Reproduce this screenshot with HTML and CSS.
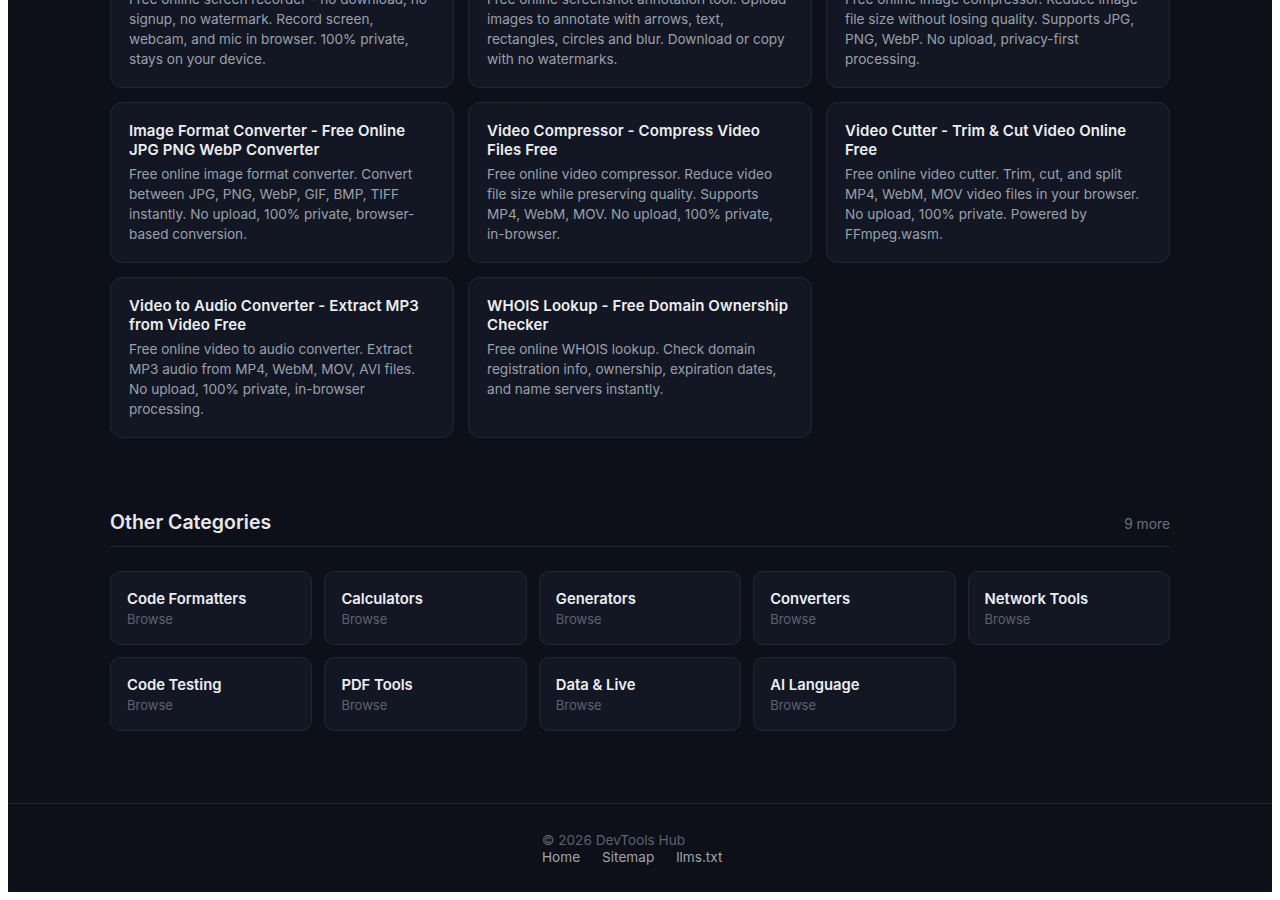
FILE: index.html
```html
<!DOCTYPE html>
<html lang="en">
<head>
    <meta charset="UTF-8">
    <meta name="viewport" content="width=device-width, initial-scale=1.0">
    <title>Media Tools - DevTools Hub</title>
    <link rel="stylesheet" href="styles.css">
</head>
<body>
    <div class="page">
        <div class="container">
            <div class="tool-grid">
                <a class="tool-card" href="#">
                    <h3>Screen Recorder - Free Online Screen Recording Tool</h3>
                    <p>Free online screen recorder - no download, no signup, no watermark. Record screen, webcam, and mic in browser. 100% private, stays on your device.</p>
                </a>
                <a class="tool-card" href="#">
                    <h3>Screenshot Annotator - Annotate Images Online Free</h3>
                    <p>Free online screenshot annotation tool. Upload images to annotate with arrows, text, rectangles, circles and blur. Download or copy with no watermarks.</p>
                </a>
                <a class="tool-card" href="#">
                    <h3>Image Compressor - Compress Images Online Free</h3>
                    <p>Free online image compressor. Reduce image file size without losing quality. Supports JPG, PNG, WebP. No upload, privacy-first processing.</p>
                </a>
                <a class="tool-card" href="#">
                    <h3>Image Format Converter - Free Online JPG PNG WebP Converter</h3>
                    <p>Free online image format converter. Convert between JPG, PNG, WebP, GIF, BMP, TIFF instantly. No upload, 100% private, browser-based conversion.</p>
                </a>
                <a class="tool-card" href="#">
                    <h3>Video Compressor - Compress Video Files Free</h3>
                    <p>Free online video compressor. Reduce video file size while preserving quality. Supports MP4, WebM, MOV. No upload, 100% private, in-browser.</p>
                </a>
                <a class="tool-card" href="#">
                    <h3>Video Cutter - Trim &amp; Cut Video Online Free</h3>
                    <p>Free online video cutter. Trim, cut, and split MP4, WebM, MOV video files in your browser. No upload, 100% private. Powered by FFmpeg.wasm.</p>
                </a>
                <a class="tool-card" href="#">
                    <h3>Video to Audio Converter - Extract MP3 from Video Free</h3>
                    <p>Free online video to audio converter. Extract MP3 audio from MP4, WebM, MOV, AVI files. No upload, 100% private, in-browser processing.</p>
                </a>
                <a class="tool-card" href="#">
                    <h3>WHOIS Lookup - Free Domain Ownership Checker</h3>
                    <p>Free online WHOIS lookup. Check domain registration info, ownership, expiration dates, and name servers instantly.</p>
                </a>
            </div>

            <section class="other-section">
                <div class="section-head">
                    <h2>Other Categories</h2>
                    <span class="count">9 more</span>
                </div>
                <div class="category-grid">
                    <a class="category-card" href="#"><strong>Code Formatters</strong><span>Browse</span></a>
                    <a class="category-card" href="#"><strong>Calculators</strong><span>Browse</span></a>
                    <a class="category-card" href="#"><strong>Generators</strong><span>Browse</span></a>
                    <a class="category-card" href="#"><strong>Converters</strong><span>Browse</span></a>
                    <a class="category-card" href="#"><strong>Network Tools</strong><span>Browse</span></a>
                    <a class="category-card" href="#"><strong>Code Testing</strong><span>Browse</span></a>
                    <a class="category-card" href="#"><strong>PDF Tools</strong><span>Browse</span></a>
                    <a class="category-card" href="#"><strong>Data &amp; Live</strong><span>Browse</span></a>
                    <a class="category-card" href="#"><strong>AI Language</strong><span>Browse</span></a>
                </div>
            </section>
        </div>

        <footer>
            <div class="footer-inner">
                <p class="copyright">© 2026 DevTools Hub</p>
                <nav class="footer-links">
                    <a href="#">Home</a>
                    <a href="#">Sitemap</a>
                    <a href="#">llms.txt</a>
                </nav>
            </div>
        </footer>
    </div>
</body>
</html>
```

FILE: styles.css
```css
* {
    box-sizing: border-box;
    margin: 0;
    padding: 0;
}

body {
    margin: 0 8px 8px;
    background: #ffffff;
    font-family: 'Inter', 'Roboto', sans-serif;
}

a {
    text-decoration: none;
    color: inherit;
}

/* the page is shown scrolled down, first row sits partly above the fold */
.page {
    margin-top: -73px;
    background: #0d1018;
    color: #e6e8ec;
}

.container {
    max-width: 1060px;
    margin: 0 auto;
}

.tool-grid {
    display: grid;
    grid-template-columns: repeat(3, 1fr);
    gap: 14px;
}

.tool-card {
    display: block;
    background: #131723;
    border: 1px solid #212635;
    border-radius: 12px;
    padding: 18px;
}

.tool-card h3 {
    font-size: 15px;
    line-height: 19px;
    font-weight: 600;
    letter-spacing: 0.1px;
    color: #eceef1;
}

.tool-card p {
    margin-top: 5px;
    font-size: 13.6px;
    line-height: 20px;
    color: #9aa0ac;
}

.other-section {
    margin-top: 70px;
}

.section-head {
    display: flex;
    justify-content: space-between;
    align-items: baseline;
    padding-bottom: 10px;
    border-bottom: 1px solid #1f2431;
}

.section-head h2 {
    font-size: 19.5px;
    line-height: 28px;
    font-weight: 600;
    color: #e6e8ec;
}

.count {
    font-size: 13.8px;
    color: #6b717d;
}

.category-grid {
    display: grid;
    grid-template-columns: repeat(5, 1fr);
    gap: 12px;
    margin-top: 24px;
}

.category-card {
    display: flex;
    flex-direction: column;
    background: #131723;
    border: 1px solid #212635;
    border-radius: 10px;
    padding: 17px 16px 15px;
}

.category-card strong {
    font-size: 14.8px;
    line-height: 20px;
    font-weight: 600;
    color: #eceef1;
}

.category-card span {
    font-size: 13px;
    line-height: 20px;
    color: #5c6270;
}

footer {
    margin-top: 72px;
    border-top: 1px solid #1f2431;
    padding: 28px 0 26px;
}

.footer-inner {
    width: 196px;
    margin: 0 auto;
    font-size: 13.6px;
    line-height: 17px;
}

.copyright {
    color: #5c6270;
}

.footer-links {
    display: flex;
    gap: 22px;
}

.footer-links a {
    color: #9ea4ae;
}
```
